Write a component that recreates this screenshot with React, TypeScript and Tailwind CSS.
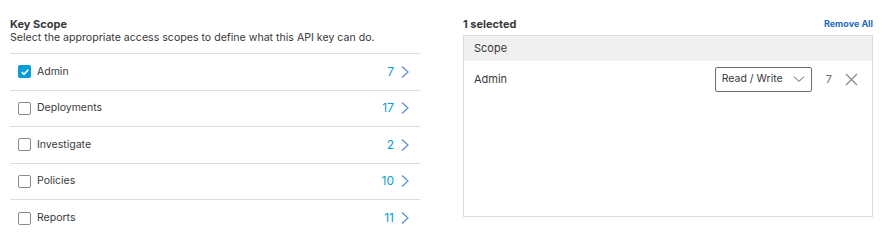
import React, { useState } from 'react';

const scopes = [
  { name: 'Admin', count: 7 },
  { name: 'Deployments', count: 17 },
  { name: 'Investigate', count: 2 },
  { name: 'Policies', count: 10 },
  { name: 'Reports', count: 11 },
];

const Chevron = () => (
  <svg width="10" height="14" viewBox="0 0 10 14" fill="none">
    <path d="M2 1.5L8 7L2 12.5" stroke="#5b8bd9" strokeWidth="1.2" />
  </svg>
);

const App: React.FC = () => {
  const [checked, setChecked] = useState<string[]>(['Admin']);

  return (
    <div className="w-[888px] h-[241px] bg-white flex text-[#3a3a3c]" style={{ fontFamily: 'Inter, "Liberation Sans", sans-serif' }}>
      {/* left column */}
      <div className="w-[410px] ml-[10px] pt-[17px]">
        <div className="text-[11px] font-bold leading-[14px] text-[#39393b]">Key Scope</div>
        <div className="text-[10.6px] leading-[14px] text-[#39393b]">Select the appropriate access scopes to define what this API key can do.</div>
        <div className="mt-[8px] border-t border-[#dcdcdc]">
          {scopes.map((s) => {
            const on = checked.includes(s.name);
            return (
              <div key={s.name} className="h-[36.5px] border-b border-[#dcdcdc] last:border-b-0 flex items-center pl-[8px] pr-[10px]">
                <button
                  onClick={() => setChecked(on ? checked.filter((c) => c !== s.name) : [...checked, s.name])}
                  className={`w-[13px] h-[13px] rounded-[2px] flex items-center justify-center ${on ? 'bg-[#049fd9]' : 'border border-[#8a8a8c] bg-white'}`}
                >
                  {on && (
                    <svg width="10" height="10" viewBox="0 0 10 10" fill="none">
                      <path d="M1.8 5.2L4 7.3L8.3 2.6" stroke="white" strokeWidth="1.6" />
                    </svg>
                  )}
                </button>
                <span className="ml-[6px] text-[10.5px] text-[#39393b]">{s.name}</span>
                <span className="ml-auto text-[12px] text-[#049fd9]">{s.count}</span>
                <span className="ml-[6px] flex items-center"><Chevron /></span>
              </div>
            );
          })}
        </div>
      </div>

      {/* right column */}
      <div className="w-[410px] ml-[43px] pt-[17px]">
        <div className="flex items-center justify-between h-[14px]">
          <span className="text-[11px] font-bold text-[#39393b]">1 selected</span>
          <button className="text-[9px] font-bold text-[#1d69cc]">Remove All</button>
        </div>
        <div className="mt-[4px] h-[182px] border border-[#dcdcdc]">
          <div className="h-[25px] bg-[#f0f0f0] flex items-center pl-[10px] text-[11px] text-[#39393b]">Scope</div>
          <div className="h-[36px] flex items-center pl-[10px] pr-[14px] text-[11px] text-[#39393b]">
            <span>Admin</span>
            <div className="ml-auto w-[97px] h-[25px] border border-[#6e6e70] rounded-[2px] flex items-center justify-between pl-[6px] pr-[6px]">
              <span className="text-[10.5px]">Read / Write</span>
              <svg width="12" height="8" viewBox="0 0 12 8" fill="none">
                <path d="M1 1.5L6 6.5L11 1.5" stroke="#58585b" strokeWidth="1" />
              </svg>
            </div>
            <span className="ml-[14px] text-[#6e6e70]">7</span>
            <svg className="ml-[13px]" width="13" height="13" viewBox="0 0 13 13" fill="none">
              <path d="M1 1L12 12M12 1L1 12" stroke="#8a8a8c" strokeWidth="1.3" />
            </svg>
          </div>
        </div>
      </div>
    </div>
  );
};

export default App;
